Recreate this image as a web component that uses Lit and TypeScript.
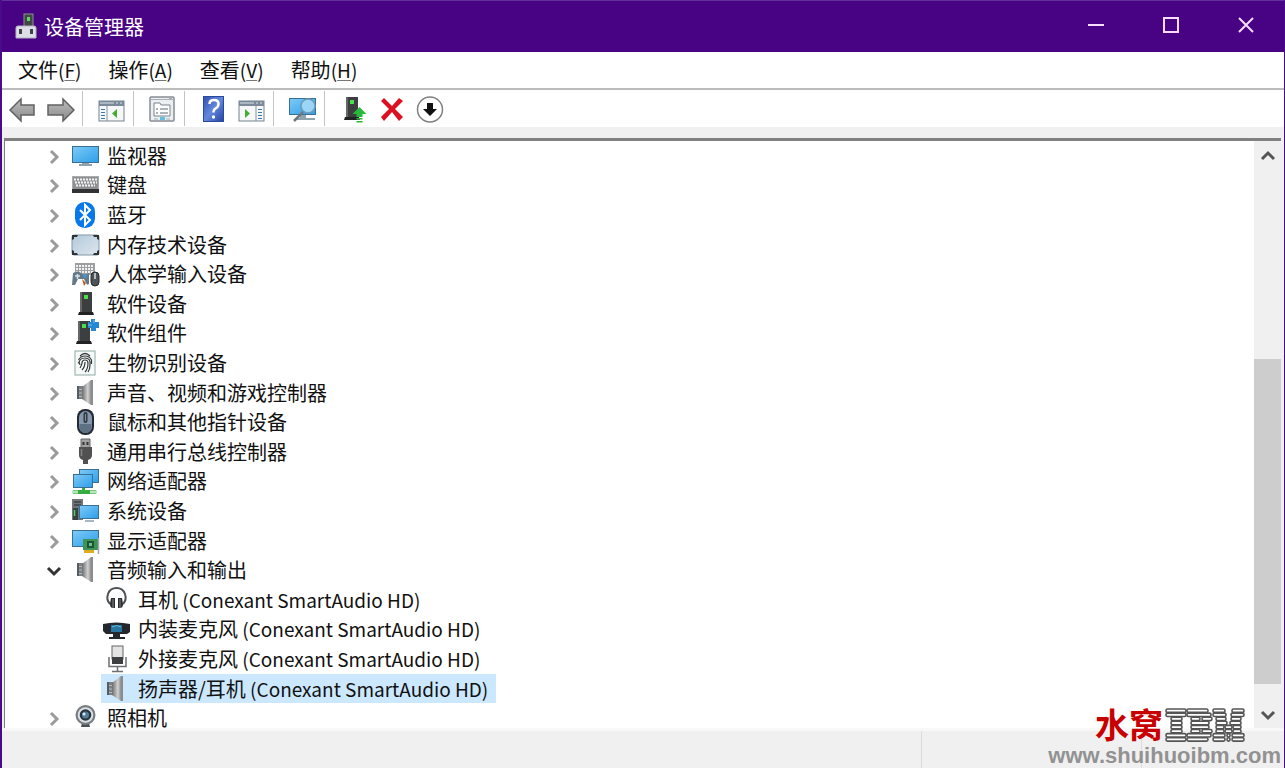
import { LitElement, html, css, svg } from "lit";
import { customElement, state } from "lit/decorators.js";

const screen = (x: number, y: number, w: number, h: number) => svg`
  <rect x=${x} y=${y} width=${w} height=${h} fill="#3a6f94"/>
  <rect x=${x + 1} y=${y + 1} width=${w - 2} height=${h - 2} fill="url(#scr)"/>`;
const defs = svg`<defs>
  <linearGradient id="scr" x1="0" y1="0" x2="1" y2="1"><stop offset="0" stop-color="#7cc9f6"/><stop offset="1" stop-color="#2f9fe9"/></linearGradient>
  <linearGradient id="grey" x1="0" y1="0" x2="1" y2="1"><stop offset="0" stop-color="#b3c9dc"/><stop offset="1" stop-color="#dde6ed"/></linearGradient>
  <linearGradient id="metal" x1="0" y1="0" x2="1" y2="0"><stop offset="0" stop-color="#6d6d6d"/><stop offset=".65" stop-color="#d2d2d2"/><stop offset="1" stop-color="#8d8d8d"/></linearGradient>
  <linearGradient id="arrow" x1="0" y1="0" x2="0" y2="1"><stop offset="0" stop-color="#bdbdbd"/><stop offset="1" stop-color="#8a8a8a"/></linearGradient>
  <linearGradient id="help" x1="0" y1="0" x2="1" y2="1"><stop offset="0" stop-color="#2d50b0"/><stop offset=".5" stop-color="#6488dc"/><stop offset="1" stop-color="#2343a0"/></linearGradient>
</defs>`;
const tower = svg`<rect x="9" y="3" width="12" height="20" fill="#3c3f3f"/><rect x="9" y="3" width="2" height="20" fill="#666"/><rect x="13" y="6" width="4" height="4" fill="#4be04b"/><path d="M8 23h14l1 3H7z" fill="#222"/>`;
const speaker = svg`<path d="M6 8h6v13H6z" fill="#7b8287"/><path d="M6 8h2v13H6z" fill="#565d62"/><path d="M8 11.500h4M8 15h4M8 18.500h4" stroke="#b3b9bd"/><path d="M11 9L20 2v25l-9-6z" fill="url(#metal)"/><path d="M20 2h2v25h-2z" fill="#8a8d90"/>`;

const art: Record<string, unknown> = {
  monitor: svg`${screen(1, 5, 27, 17)}<path d="M11 22h7v1h3v2H8v-2h3z" fill="#8fa3af"/>`,
  keyboard: svg`<rect x="1" y="6" width="27" height="14" fill="#a8acae"/><rect x="2" y="7" width="25" height="12" fill="#8d9194"/><path d="M3 9.500h23M4 12.500h22M5 15.500h19" stroke="#f4f4f4" stroke-width="2" stroke-dasharray="2 1"/><rect x="1" y="19" width="27" height="4" fill="#303234"/>`,
  bluetooth: svg`<rect x="4" y="2" width="20" height="26" rx="9.5" fill="#0879e8"/><path d="M9 10l10 10-5 5V5l5 5L9 20" fill="none" stroke="#fff" stroke-width="2"/>`,
  memory: svg`<rect x="1" y="5" width="27" height="20" rx="2" fill="url(#grey)" stroke="#8397a6"/><path d="M1 10V5h6l-1 2H3v2zM22 5h6v5l-2-1V7h-3zM1 20v5h6l-1-2H3v-2zM28 20v5h-6l1-2h3v-2z" fill="#303336"/>`,
  hid: svg`<rect x="4" y="4" width="20" height="12" fill="#9b9fa2"/><path d="M5 7h18M5 10h18M5 13h18" stroke="#f2f2f2" stroke-width="2" stroke-dasharray="2 1"/><path d="M2 14q5-3 8 0t8 0v11q-2 2-3-1l-2-4H7l-3 6H1z" fill="#667887"/><path d="M4 17h5M6.500 15v5" stroke="#d3e2eb" stroke-width="1.500"/><circle cx="14" cy="17" r="2" fill="#4396cf"/><path d="M11 20l2 7 2-3z" fill="#b45b22"/><rect x="20" y="13" width="8" height="14" rx="4" fill="#4d5358" stroke="#25282b"/><path d="M24 14v6" stroke="#bbb" stroke-width="2"/>`,
  tower,
  component: svg`<g transform="translate(-2 0)">${tower}</g><path d="M20 1h4v3h4v6h-3v3h-5v-3h-3V4h3z" fill="#2389d3"/><path d="M17 7h4M23 2v3" stroke="#79c3f4"/>`,
  finger: svg`<rect x="4" y="3" width="20" height="24" fill="#f6fbf9" stroke="#8eaaa4"/><g fill="none" stroke="#34393b" stroke-width="1.200"><path d="M9 8q5-5 10 0M7.500 12q2-4 6.500-4t6.500 4v4M8 16q0-6 6-6t5 7q0 4-2 7M9 20q2-3 2-5 0-3 3-3t3 3q0 6-3 9M11 22q3-3 3-8M7 14q2 1 2 3"/></g>`,
  speaker,
  mouse: svg`<rect x="6" y="2" width="17" height="26" rx="8" fill="#252b33"/><rect x="8" y="4" width="13" height="22" rx="6.500" fill="#8499ad"/><path d="M8.500 17h12v3q-1 6-6 6t-6-6z" fill="#5d7185"/><rect x="12.500" y="5" width="4" height="11" rx="2" fill="#303842"/><path d="M14.500 7v7" stroke="#8594a3"/>`,
  usb: svg`<path d="M10 2h9v9h-9z" fill="#a1a1a1" stroke="#666"/><path d="M11.500 5h2v3h-2zM15.500 5h2v3h-2z" fill="#333"/><path d="M8 10h13v8q0 4-4 5v4h-5v-4q-4-1-4-5z" fill="#515151"/><path d="M10.500 12v7" stroke="#838383" stroke-width="1.500"/>`,
  network: svg`<g transform="translate(0 1)">${screen(8, 2, 20, 14)}${screen(2, 7, 20, 14)}<path d="M11 21h3v2h11v4H2v-4h9z" fill="#35ad42"/><path d="M1 25h6M19 25h7" stroke="#b8e5b9" stroke-width="3"/></g>`,
  system: svg`<g transform="translate(0 1)"><rect x="1" y="2" width="11" height="21" fill="#70767a"/><path d="M3 5h7M3 8h7" stroke="#3c4144" stroke-width="1.500"/><path d="M2 11h5v12H2z" fill="#3b4043"/><path d="M3.500 13v6" stroke="#4ed15b" stroke-width="1.500"/>${screen(8, 8, 20, 14)}<path d="M14 23h9v2h-9z" fill="#a6b7c2"/></g>`,
  display: svg`<g transform="translate(0 1)">${screen(1, 3, 27, 17)}<path d="M12 12h15v11H12z" fill="#3f9357"/><path d="M16 14h7v7h-7z" fill="#1c5534"/><path d="M18 16h3v3h-3z" fill="#6fbf86"/><path d="M13 23h10v3H13z" fill="#dfac20"/><path d="M27.500 11v16" stroke="#9ba8ad" stroke-width="1.500"/></g>`,
  headphones: svg`<path d="M9 19Q5 15 7 9 9 3 15.500 3t8.500 6q2 6-2 10" fill="none" stroke="#4e5153" stroke-width="2"/><path d="M10 13h4v10h-2q-3 0-3-4zM17 13h4l1 6q0 4-3 4h-2z" fill="#2c2f31"/><path d="M12 14v9M19 14v9" stroke="#83888b"/>`,
  micIn: svg`<g transform="translate(0 1)"><path d="M2 9q13-3 27 0v8l-3 2h-7v3h5v2H8v-2h4v-3H5l-3-3z" fill="#24282d"/><rect x="10" y="10" width="11" height="7" fill="#26769f"/><path d="M11 12q5-3 9 0" stroke="#64b8dd" fill="none"/></g>`,
  micOut: svg`<rect x="11" y="2" width="11" height="13" fill="#e3e3e3" stroke="#666"/><rect x="11" y="13" width="11" height="7" fill="#3d4042"/><path d="M8 13v9.500h17V13M16.500 23v4M11 27.500h11" stroke="#6b7073" stroke-width="1.500" fill="none"/>`,
  camera: svg`<path d="M11 20h7l1 4h-9z" fill="#4b5054"/><circle cx="14.500" cy="12" r="10" fill="#777d81"/><circle cx="14.500" cy="12" r="7.800" fill="#dce1e3"/><circle cx="14.500" cy="12" r="5.800" fill="#27343e"/><circle cx="14.500" cy="12" r="3.500" fill="#547b98"/><circle cx="13" cy="11" r="1.500" fill="#d4e8f5"/>`,
  back: svg`<path d="M2 15L13 4v6h13v10H13v6z" fill="url(#arrow)" stroke="#626262" stroke-width="1.500"/>`,
  forward: svg`<path d="M28 15L17 4v6H2v10h15v6z" fill="url(#arrow)" stroke="#626262" stroke-width="1.500"/>`,
  tree: svg`<rect x="2" y="6" width="25" height="20" fill="#f5f7f8" stroke="#75828d"/><path d="M2 6h25v5H2z" fill="#7b8a98"/><path d="M3 8h14M19 8h2M23 8h2" stroke="#dce4e9"/><path d="M10 11v15" stroke="#8795a1"/><path d="M4 14.500h4M4 17.500h4M4 20.500h4M4 23.500h4" stroke="#3d78ad"/><path d="M20 14v9l-5-4.500z" fill="#46ad33"/>`,
  props: svg`<rect x="2" y="2" width="24" height="24" rx="1" fill="#eceff1" stroke="#858d94" stroke-width="1.500"/><path d="M3 4.500h22M21 3.500h3" stroke="#aab0b5"/><path d="M6 8h6l1 2h9v11H6z" fill="#fff" stroke="#78848e"/><path d="M8 14h2M12 14h8M8 18h2M12 18h8" stroke="#596672"/><path d="M12 22h5v3h-5z" fill="#63c0df"/><path d="M6 24h4M18 24h4" stroke="#aaa"/>`,
  help: svg`<rect x="4.500" y="1.500" width="20" height="25" fill="url(#help)" stroke="#294a9f"/><path d="M10.500 9q0-4 4.500-4t4.500 4q0 3-3 4.500-2 1-2 4" fill="none" stroke="#fff" stroke-width="2.500"/><circle cx="14.500" cy="22" r="1.700" fill="#fff"/>`,
  action: svg`<rect x="2" y="6" width="25" height="20" fill="#f5f7f8" stroke="#75828d"/><path d="M2 6h25v5H2z" fill="#7b8a98"/><path d="M3 8h14M19 8h2M23 8h2" stroke="#dce4e9"/><path d="M19 11v15" stroke="#8795a1"/><path d="M21 14.500h4M21 17.500h4M21 20.500h4M21 23.500h4" stroke="#3d78ad"/><path d="M8 14v9l5-4.500z" fill="#46ad33"/>`,
  scan: svg`${screen(1, 3, 27, 17)}<path d="M12 20h6v3h9v2H8v-2h4z" fill="#8fa3af"/><circle cx="20" cy="11" r="7" fill="#a9daf7" fill-opacity=".85" stroke="#6b9cba" stroke-width="1.500"/><path d="M15 17l-9 9" stroke="#6c7881" stroke-width="2.500"/>`,
  update: svg`<g transform="translate(-2 -1)">${tower}</g><path d="M20.500 12l7 7h-4v3h-6v-3h-4zM17.500 23h6v1.500h-6zM17.500 26h6v1.500h-6z" fill="#28b93c"/>`,
  remove: svg`<path d="M4 6l3-3 8 8 7-8 4 3-8 8 8 8-4 4-7-9-8 9-3-4 8-8z" fill="#dc1020"/>`,
  disable: svg`<circle cx="15" cy="14.500" r="12.500" fill="#fff" stroke="#808080" stroke-width="1.500"/><path d="M12 8h6v6h4l-7 7-7-7h4z" fill="#111"/>`,
  app: svg`<rect x="16" y="2" width="9" height="14" fill="#414747" stroke="#8b9292"/><rect x="19" y="5" width="3" height="4" fill="#67d267"/><path d="M8 16q0-2 2-2h16q2 0 2 2v10H8z" fill="#dedfe6" stroke="#b5b5c2"/><path d="M11 17h3v5h-3zM22 17h3v5h-3z" fill="#3d4148"/>`,
};
const icon = (name: string) => html`<svg class="icon" viewBox="0 0 30 30" aria-hidden="true">${defs}${art[name]}</svg>`;

const classes: [string, string][] = [
  ["monitor", "监视器"], ["keyboard", "键盘"], ["bluetooth", "蓝牙"], ["memory", "内存技术设备"],
  ["hid", "人体学输入设备"], ["tower", "软件设备"], ["component", "软件组件"], ["finger", "生物识别设备"],
  ["speaker", "声音、视频和游戏控制器"], ["mouse", "鼠标和其他指针设备"], ["usb", "通用串行总线控制器"],
  ["network", "网络适配器"], ["system", "系统设备"], ["display", "显示适配器"],
];
const devices: [string, string][] = [
  ["headphones", "耳机"], ["micIn", "内装麦克风"], ["micOut", "外接麦克风"], ["speaker", "扬声器/耳机"],
];

@customElement("app-root")
export class AppRoot extends LitElement {
  @state() selected = 3;

  static styles = css`
    :host { display: block; font: 20px/28px "Noto Sans CJK SC", "Open Sans", sans-serif; color: #111; }
    * { box-sizing: border-box; }
    button { font: inherit; color: inherit; background: none; border: 0; padding: 0; margin: 0; }
    u { text-decoration-thickness: 1px; text-decoration-color: #777; text-underline-offset: 2px; }
    .window { height: 100vh; display: flex; flex-direction: column; background: #f0f0f0; border: solid #4a0a8c; border-width: 0 1px 0 2px; overflow: hidden; }
    .icon { width: 30px; height: 30px; display: block; flex: none; }
    .latin { font-size: 19px; }
    header { height: 52px; flex: none; display: flex; align-items: center; background: #480284; border-top: 1px solid #62329c; color: #fff; padding: 0 1px 0 6px; }
    header .icon { margin-right: 6px; }
    h1 { font-size: 20px; line-height: 28px; font-weight: 400; margin: 0; flex: 1; }
    .caption { width: 75px; height: 48px; display: grid; place-items: center; align-self: flex-start; }
    .caption svg { width: 18px; height: 18px; fill: none; stroke: #f8dcff; stroke-width: 2; }
    .menu { height: 38px; flex: none; display: flex; align-items: center; gap: 27px; padding-left: 16px; background: #fff; border-bottom: 2px solid #bcbcbc; }
    .tools { height: 37px; flex: none; display: flex; align-items: center; background: #fff; padding-left: 6px; }
    .group { display: flex; gap: 8px; padding: 2px 6px 0 14px; height: 35px; align-items: center; border-right: 1px solid #c4c4c4; }
    .group:first-child { padding-left: 0; }
    .group:last-child { border: 0; }
    .pane { flex: 1; min-height: 0; display: flex; margin: 11px 3px 0 2px; border: solid #808080; border-width: 3px 0 0 1px; background: #fff; overflow: hidden; }
    .tree { flex: 1; height: calc(100% + 5px); margin: 0; padding: 0; list-style: none; display: grid; grid-auto-rows: minmax(0, 1fr); }
    .row { display: flex; align-items: center; height: 100%; padding-left: 38px; min-width: 0; }
    .twist { width: 22px; height: 22px; margin-right: 6px; flex: none; }
    .twist svg { display: block; width: 22px; height: 22px; fill: none; stroke: #9b9b9b; stroke-width: 3; }
    .twist.open svg { stroke: #333; }
    .name { margin-left: 6px; line-height: 20px; white-space: nowrap; }
    .device { padding-left: 96px; }
    .device .name { margin-left: 7px; }
    .pick { display: flex; align-items: center; height: 100%; padding-right: 8px; white-space: nowrap; }
    .pick.on { background: #cce8ff; }
    .scroll { width: 27px; flex: none; background: #f0f0f0; display: flex; flex-direction: column; }
    .scroll button { height: 28px; display: grid; place-items: center; padding-top: 2px; }
    .scroll svg { width: 16px; height: 12px; fill: none; stroke: #555; stroke-width: 3; }
    .track { flex: 1; display: grid; grid-template-rows: 190fr 326fr 16fr; }
    .thumb { grid-row: 2; background: #cdcdcd; }
    footer { height: 40px; flex: none; border-top: 3px solid #f8f8f8; display: grid; grid-template-columns: 920fr 220fr 142fr; }
    footer span { border-right: 1px solid #dcdcdc; }
    .mark { position: absolute; right: 4px; bottom: 1px; text-align: right; pointer-events: none; }
    .brand { display: flex; justify-content: flex-end; align-items: center; gap: 2px; padding-right: 36px; }
    .brand b { color: #c80000; font: 700 34px/42px "Noto Sans CJK SC", sans-serif; }
    .ibm { width: 80px; height: 36px; display: block; }
    .site { font: 700 22px/22px "Liberation Sans", sans-serif; color: #929292; }
  `;

  tool(name: string, label: string) {
    return html`<button aria-label=${label} title=${label}>${icon(name)}</button>`;
  }

  classRow(name: string, label: string, open = false) {
    return html`<li><div class="row">
      <button class="twist ${open ? "open" : ""}" aria-label=${(open ? "折叠" : "展开") + label}>
        <svg viewBox="0 0 22 22"><path d=${open ? "M5 9l6 6 6-6" : "M8 6l6 6-6 6"} /></svg>
      </button>${icon(name)}<span class="name">${label}</span></div></li>`;
  }

  render() {
    const rows = [0, 1, 2, 3, 4, 5, 6, 7];
    return html`<div class="window">
      <header>${icon("app")}<h1>设备管理器</h1>
        <button class="caption" aria-label="最小化"><svg viewBox="0 0 18 18"><path d="M1 9h16" /></svg></button>
        <button class="caption" aria-label="最大化"><svg viewBox="0 0 18 18"><path d="M2 2h14v14H2z" /></svg></button>
        <button class="caption" aria-label="关闭"><svg viewBox="0 0 18 18"><path d="M2 2l14 14M16 2L2 16" /></svg></button>
      </header>
      <nav class="menu">
        ${[["文件", "F"], ["操作", "A"], ["查看", "V"], ["帮助", "H"]].map(([t, k]) => html`<button>${t}<span class="latin">(<u>${k}</u>)</span></button>`)}
      </nav>
      <div class="tools" role="toolbar">
        <div class="group">${this.tool("back", "后退")}${this.tool("forward", "前进")}</div>
        <div class="group">${this.tool("tree", "显示/隐藏控制台树")}</div>
        <div class="group">${this.tool("props", "属性")}</div>
        <div class="group">${this.tool("help", "帮助")}${this.tool("action", "显示/隐藏操作窗格")}</div>
        <div class="group">${this.tool("scan", "扫描检测硬件改动")}</div>
        <div class="group">${this.tool("update", "更新驱动程序")}${this.tool("remove", "卸载设备")}${this.tool("disable", "禁用设备")}</div>
      </div>
      <main class="pane">
        <ul class="tree">
          ${classes.map(([i, t]) => this.classRow(i, t))}
          ${this.classRow("speaker", "音频输入和输出", true)}
          ${devices.map(([i, t], n) => html`<li><div class="row device">
            <button class="pick ${n === this.selected ? "on" : ""}" @click=${() => (this.selected = n)}>
              ${icon(i)}<span class="name">${t}<span class="latin"> (Conexant SmartAudio HD)</span></span>
            </button></div></li>`)}
          ${this.classRow("camera", "照相机")}
        </ul>
        <div class="scroll">
          <button aria-label="向上滚动"><svg viewBox="0 0 16 12"><path d="M2 9l6-6 6 6" /></svg></button>
          <div class="track"><div class="thumb"></div></div>
          <button aria-label="向下滚动"><svg viewBox="0 0 16 12"><path d="M2 3l6 6 6-6" /></svg></button>
        </div>
      </main>
      <footer><span></span><span></span></footer>
      <div class="mark">
        <div class="brand"><b>水窝</b>
          <svg class="ibm" viewBox="0 0 80 36" role="img" aria-label="IBM" fill="#fff" stroke="#555" stroke-width="1.600">
            ${rows.map((r) => {
              const y = 3 + r * 4.1;
              const edge = r < 2 || r > 5;
              const bar = (x: number, w: number) => svg`<rect x=${x} y=${y} width=${w} height="3.400" rx="1.500" />`;
              return svg`${edge ? bar(1, 20) : bar(6, 11)}
                ${edge ? bar(22, r === 0 || r === 7 ? 21 : 24) : r === 3 || r === 4 ? bar(26, 18) : svg`${bar(26, 9)}${bar(37, 10)}`}
                ${r < 2 ? svg`${bar(48, 12 + r)}${bar(67 - r, 12 + r)}` : r < 4 ? svg`${bar(51, 8 + r)}${bar(68 - r, 8 + r)}` : r < 6 ? svg`${bar(51, 8)}${bar(60, 7)}${bar(68, 8)}` : svg`${bar(48, 12)}${bar(62, 3)}${bar(67, 12)}`}`;
            })}
          </svg>
        </div>
        <div class="site">www.shuihuoibm.com</div>
      </div>
    </div>`;
  }
}
